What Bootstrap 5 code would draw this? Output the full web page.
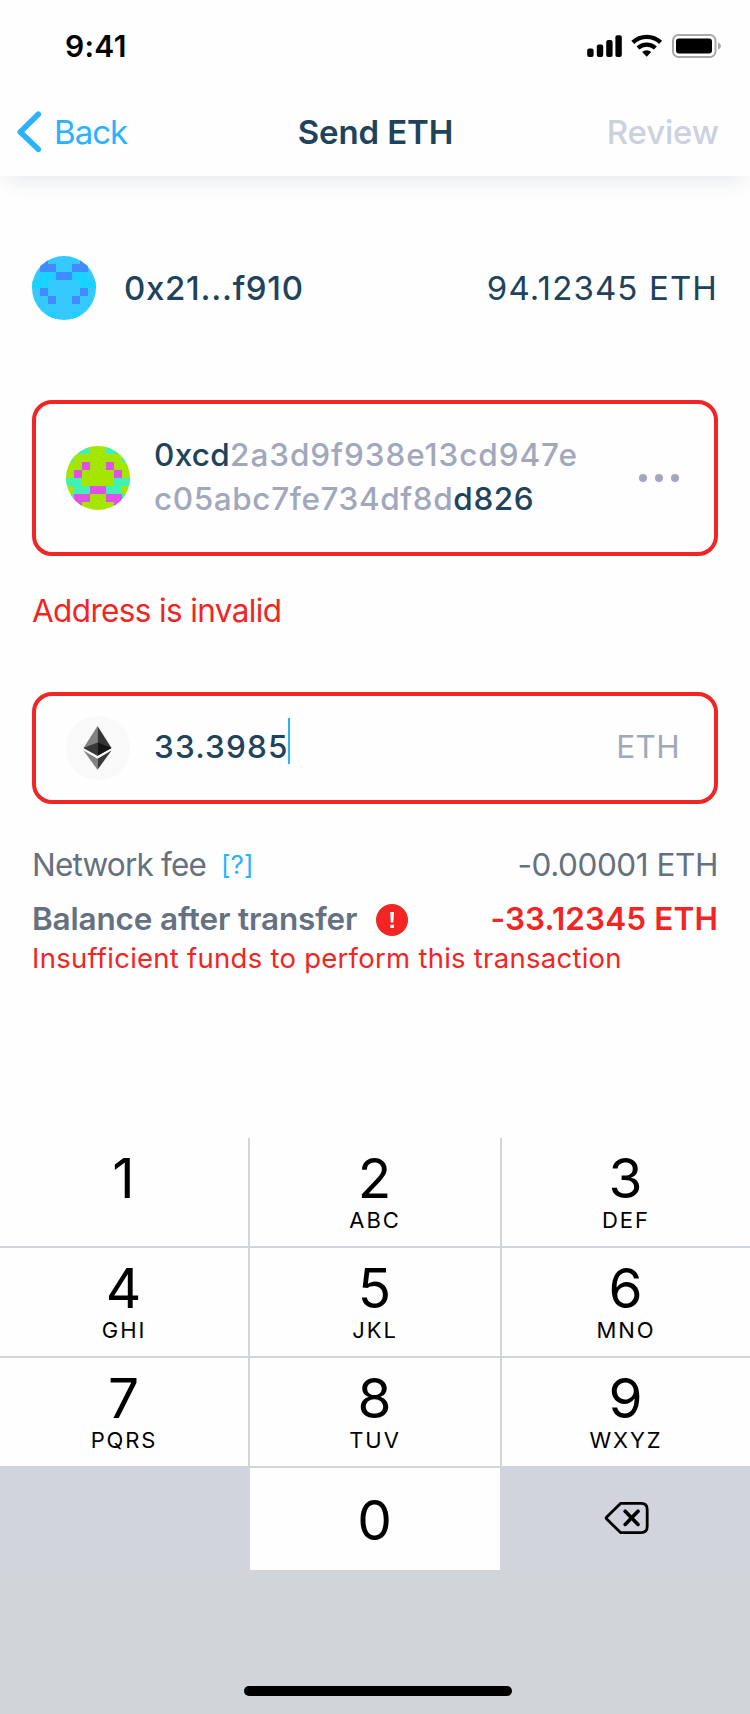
<!DOCTYPE html>
<html lang="en">
<head>
<meta charset="utf-8">
<meta name="viewport" content="width=device-width, initial-scale=1">
<title>Send ETH</title>
<link href="https://cdn.jsdelivr.net/npm/bootstrap@5.3.0/dist/css/bootstrap.min.css" rel="stylesheet">
<style>
  :root { --ink:#20435c; --sky:#2ab2fe; --alert:#f22525; --mute:#a1a8bc; --slate:#657180; --line:#d1d4db; }
  body { font-family: Inter, "Liberation Sans", sans-serif; color: var(--ink); background:#fefefe; line-height:1; }
  svg { display:block; flex:none; }
  .phone { width:750px; height:1714px; overflow:hidden; white-space:nowrap; }
  .topbar { height:176px; background:#fefefe; box-shadow:0 10px 22px -8px rgba(32,67,92,.14); }
  .status { height:88px; padding:3px 28px 0 65px; color:#000; }
  .clock { font-size:30px; font-weight:600; letter-spacing:.3px; }
  .titlebar { height:88px; padding:0 31px 0 17px; font-size:33px; }
  .titlebar > * { flex:1 1 0; }
  .back-link { color:var(--sky); letter-spacing:-.95px; gap:12px; text-decoration:none; }
  .heading { font-weight:600; letter-spacing:-.12px; font-size:33px; margin:0; padding:2px 0 0 15px; }
  .review { font-weight:500; color:#cbd1de; letter-spacing:-.16px; }
  .content { padding:80px 32px 0; height:962px; }
  .sender { height:64px; margin-bottom:80px; font-size:33px; }
  .sender-name { font-weight:500; letter-spacing:.7px; margin-left:28px; }
  .sender-sum { letter-spacing:1.13px; }
  .field { border:4px solid var(--alert); border-radius:20px; width:686px; padding:0 34px 0 30px; font-size:31.5px; }
  .field-address { height:156px; }
  .field-amount { height:112px; }
  .address { font-weight:500; line-height:44px; color:var(--mute); margin:-3px 0 0 24px; letter-spacing:.93px; }
  .address div + div { letter-spacing:.6px; }
  .address b { font-weight:500; color:var(--ink); }
  .address .head { letter-spacing:.3px; }
  .more { margin-right:1px; }
  .err { color:var(--alert); }
  .err-address { font-size:31.5px; letter-spacing:-.63px; line-height:40px; margin:35px 0 61px 0; }
  .amount { font-weight:500; letter-spacing:1.17px; margin:-3px 0 0 24px; }
  .caret { width:2px; height:46px; background:var(--sky); margin:-14px 0 0 -1px; }
  .unit { color:var(--mute); letter-spacing:.37px; margin-top:-3px; }
  .summary { margin:34px 0 0; color:var(--slate); font-size:31.5px; }
  .summary .line { height:54px; }
  .fee-label { letter-spacing:-.81px; }
  .hint { font-size:26px; color:var(--sky); margin-left:15px; letter-spacing:.1px; text-decoration:none; margin-top:-1px; }
  .fee { letter-spacing:-.43px; }
  .after-label { font-weight:600; letter-spacing:-.17px; }
  .after-sum { font-weight:600; letter-spacing:.11px; color:var(--alert); }
  .bang { margin-left:19px; margin-top:2px; }
  .err-funds { font-size:27.5px; letter-spacing:.26px; line-height:30px; margin-top:-3px; }
  .keypad { display:grid; grid-template-columns:248px 250px 248px; grid-template-rows:108px 108px 108px 102px; gap:2px; background:var(--line); color:#000; }
  .key { background:#fefefe; font-size:55px; line-height:56px; padding-top:12px; text-align:center; padding-right:1px; }
  .key small { display:block; font-size:22px; line-height:24px; margin-top:2px; letter-spacing:1.9px; padding-left:1px; }
  .key.zero { padding-top:24px; }
  .key.blank { background:#d1d4dd; padding:0; margin-top:-2px; height:102px; }
  .key.blank.l { margin-right:-2px; }
  .key.blank.r { margin-left:-2px; padding:2px 0 0 3px; }
  .dock { height:144px; background:#d1d4d9; padding:116px 0 0 244px; }
  .home-bar { width:268px; height:10px; border-radius:5px; background:#000; }
</style>
</head>
<body>
<main class="phone">
  <header class="topbar">
    <div class="status d-flex align-items-center justify-content-between">
      <span class="clock">9:41</span>
      <svg width="136" height="26" viewBox="586 33 136 26" aria-label="Signal, Wi-Fi, battery">
        <rect x="587.2" y="48.4" width="6.4" height="8.6" rx="2"/>
        <rect x="596.8" y="44.6" width="6.4" height="12.4" rx="2"/>
        <rect x="606.2" y="40" width="6.4" height="17" rx="2"/>
        <rect x="615.4" y="35.2" width="6.4" height="21.8" rx="2"/>
        <g fill="none" stroke="#000" stroke-width="4.3">
          <path d="M632.8 42.4a20.2 20.2 0 0 1 27.8 0"/>
          <path d="M638 48a12.7 12.7 0 0 1 17.4 0"/>
        </g>
        <path d="M642.2 52a6.600 6.600 0 0 1 9 0l-4.500 4.700z"/>
        <rect x="673" y="35" width="42.500" height="22" rx="5.500" fill="none" stroke="#a8a8a8" stroke-width="2"/>
        <rect x="676" y="38.400" width="36" height="15" rx="3"/>
        <path d="M718 42.200q3 1.400 3 3.800t-3 3.800z" fill="#a8a8a8"/>
      </svg>
    </div>
    <nav class="titlebar d-flex align-items-center">
      <a class="back-link d-flex align-items-center" href="#">
        <svg width="25" height="42" viewBox="0 0 25 42"><path d="M21.300 3.300 3.300 21l18 17.300" fill="none" stroke="#2ab2fe" stroke-width="5.600" stroke-linecap="round" stroke-linejoin="round"/></svg>
        Back
      </a>
      <h1 class="heading text-center">Send ETH</h1>
      <span class="review text-end">Review</span>
    </nav>
  </header>

  <section class="content">
    <div class="sender d-flex align-items-center">
      <svg class="rounded-circle" width="64" height="64" viewBox="0 0 8 8" shape-rendering="crispEdges">
        <path fill="#34c9ff" d="M0 0h8v8H0z"/>
        <path fill="#17d2ff" d="M1 2h2v1H1zM5 2h2v1H5zM0 3h2v1H0zM6 3h2v1H6zM2 7h1v1H2zM5 7h1v1H5z"/>
        <path fill="#408cff" d="M1 0h1v1h1v1H1zM6 0h1v2H5V1h1zM3 2h2v1H3zM1 4h1v1H1zM6 4h1v1H6zM2 5h1v1H2zM5 5h1v1H5z"/>
      </svg>
      <span class="sender-name">0x21...f910</span>
      <span class="sender-sum ms-auto">94.12345 ETH</span>
    </div>

    <div class="field field-address d-flex align-items-center">
      <svg class="rounded-circle" width="64" height="64" viewBox="0 0 8 8" shape-rendering="crispEdges">
        <path fill="#a5e600" d="M0 0h8v8H0z"/>
        <path fill="#40f0b4" d="M0 0h3v1H1v1H0zM5 0h3v2H7V1H5zM0 4h2v1h4V4h2v1H7v1H1V5H0zM0 6h1v1H0zM7 6h1v1H7z"/>
        <path fill="#e04fe6" d="M2 2h1v1H2zM5 2h1v1H5zM1 3h1v1H1zM6 3h1v1H6zM3 5h2v1H3zM1 6h2v1H2v1H1zM5 6h2v2H6V7H5z"/>
      </svg>
      <div class="address">
        <div><b class="head">0xcd</b>2a3d9f938e13cd947e</div>
        <div>c05abc7fe734df8d<b>d826</b></div>
      </div>
      <svg class="more ms-auto" width="40" height="8" viewBox="0 0 40 8" fill="#a1a8bc"><circle cx="4" cy="4" r="4"/><circle cx="20" cy="4" r="4"/><circle cx="36" cy="4" r="4"/></svg>
    </div>
    <div class="err err-address">Address is invalid</div>

    <div class="field field-amount d-flex align-items-center">
      <svg width="64" height="64" viewBox="66 716 64 64">
        <circle cx="98" cy="748" r="32" fill="#f9f9f9"/>
        <path fill="#828282" d="M97.500 726v29.800L83.500 748z"/>
        <path fill="#343434" d="M97.500 726v29.800l14-7.800z"/>
        <path fill="#393939" d="M97.500 742.600v13.200L83.500 748z"/>
        <path fill="#141414" d="M97.500 742.600v13.200l14-7.800z"/>
        <path fill="#828282" d="M97.500 758.800v11L83.500 750.600z"/>
        <path fill="#393939" d="M97.500 758.800v11l14-19.200z"/>
      </svg>
      <span class="amount">33.3985</span><span class="caret"></span>
      <span class="unit ms-auto">ETH</span>
    </div>

    <div class="summary">
      <div class="line d-flex align-items-center">
        <span class="fee-label">Network fee</span><a class="hint" href="#">[?]</a>
        <span class="fee ms-auto">-0.00001 ETH</span>
      </div>
      <div class="line d-flex align-items-center">
        <span class="after-label">Balance after transfer</span>
        <svg class="bang" width="32" height="32" viewBox="0 0 32 32"><circle cx="16" cy="16" r="16" fill="#f22525"/><path fill="#fff" d="M14.200 8h3.800l-.6 10.500h-2.600zM14.300 20.800h3.600V24h-3.600z"/></svg>
        <span class="after-sum ms-auto">-33.12345 ETH</span>
      </div>
      <div class="err err-funds">Insufficient funds to perform this transaction</div>
    </div>
  </section>

  <section class="keypad">
    <div class="key">1</div>
    <div class="key">2<small>ABC</small></div>
    <div class="key">3<small>DEF</small></div>
    <div class="key">4<small>GHI</small></div>
    <div class="key">5<small>JKL</small></div>
    <div class="key">6<small>MNO</small></div>
    <div class="key">7<small>PQRS</small></div>
    <div class="key">8<small>TUV</small></div>
    <div class="key">9<small>WXYZ</small></div>
    <div class="key blank l"></div>
    <div class="key zero">0</div>
    <div class="key blank r d-flex align-items-center justify-content-center">
      <svg width="46" height="34" viewBox="0 0 46 34" fill="none" stroke="#000" stroke-width="2.800" stroke-linecap="round" stroke-linejoin="round"><path d="M16.500 2.400h20.700q6 0 6 6v17.200q0 6-6 6H16.500L2.500 17.800q-.8-.8 0-1.600z"/><path stroke-width="3.600" d="m21.200 10.200 12.800 13.200m0-13.200L21.200 23.400"/></svg>
    </div>
  </section>
  <footer class="dock"><div class="home-bar"></div></footer>
</main>
<script src="https://cdn.jsdelivr.net/npm/bootstrap@5.3.0/dist/js/bootstrap.bundle.min.js"></script>
</body>
</html>
